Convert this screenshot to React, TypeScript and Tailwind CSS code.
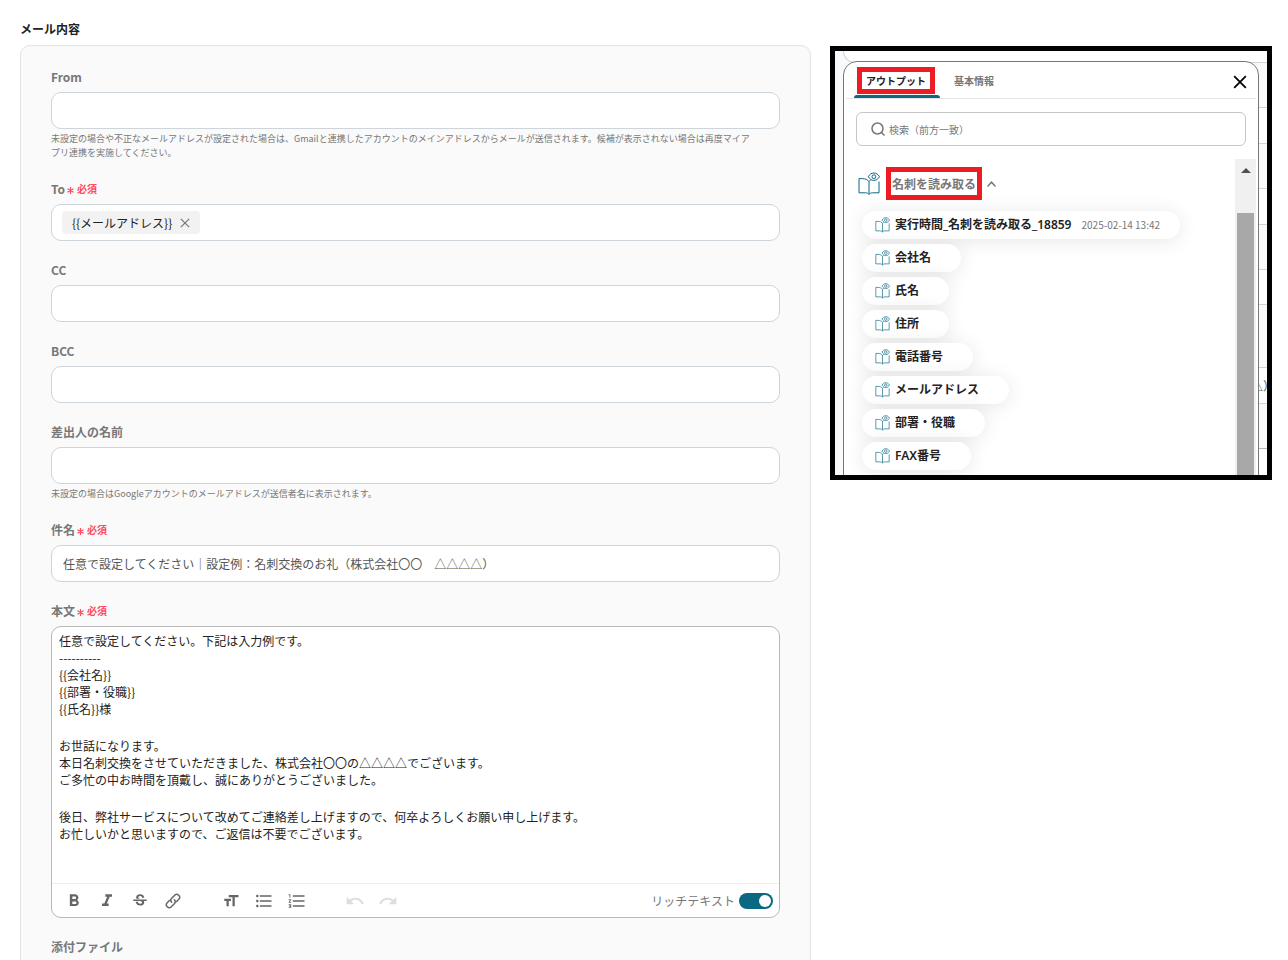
import { useState } from "react"
import type { ReactNode } from "react"
import {
  MdFormatBold,
  MdFormatItalic,
  MdFormatListBulleted,
  MdFormatListNumbered,
  MdFormatSize,
  MdRedo,
  MdStrikethroughS,
  MdUndo,
} from "react-icons/md"

const outputs = [
  { name: "実行時間_名刺を読み取る_18859", value: "2025-02-14 13:42" },
  { name: "会社名" },
  { name: "氏名" },
  { name: "住所" },
  { name: "電話番号" },
  { name: "メールアドレス" },
  { name: "部署・役職" },
  { name: "FAX番号" },
]

/* ---------------- ICONS ---------------- */
function BookIcon({ className }: { className: string }) {
  return (
    <svg viewBox="0 0 22 24" fill="none" stroke="currentColor" strokeLinejoin="round" className={className}>
      <path d="M11 9.5C9.5 7.5 7 6.6 4.5 6.6H1v14.2h6.5c1.6 0 2.6.5 3.5 1.6.9-1.1 1.9-1.6 3.5-1.6H21V9.5" />
      <path d="M11 9.5v12.9M11 9.5c.4-.6.9-1.1 1.5-1.5" />
      <path d="M10.3 4.7C11.7 2.3 13.5 1 15.9 1s4.2 1.3 5.6 3.7c-1.4 2.4-3.2 3.7-5.6 3.7s-4.2-1.3-5.6-3.7z" />
      <circle cx="15.9" cy="4.7" r="1.9" />
    </svg>
  )
}

function ChainIcon() {
  return (
    <svg viewBox="0 0 16 16" fill="none" stroke="currentColor" strokeWidth="1.5" strokeLinecap="round" className="size-4">
      <path d="M6.7 9.3a2.9 2.9 0 0 1 0-4.1l3-3a2.9 2.9 0 0 1 4.1 4.1l-2.2 2.2" />
      <path d="M9.3 6.7a2.9 2.9 0 0 1 0 4.1l-3 3a2.9 2.9 0 0 1-4.1-4.1l2.2-2.2" />
    </svg>
  )
}

function CrossIcon({ className }: { className: string }) {
  return (
    <svg viewBox="0 0 12 12" fill="none" stroke="currentColor" strokeWidth="1.5" className={className}>
      <path d="M1 1l10 10M11 1L1 11" />
    </svg>
  )
}

/* ---------------- FORM PARTS ---------------- */
function Label({ id, text, required }: { id: string; text: string; required?: boolean }) {
  return (
    <label htmlFor={id} className="mb-[6px] flex items-center gap-[2px] text-xs leading-[18px] font-semibold text-[#777]">
      {text}
      {required && (
        <span className="flex items-center gap-[3px] text-[10px] font-bold text-[#ff4b5c]">
          <svg viewBox="0 0 8 8" stroke="currentColor" strokeWidth="1.4" className="mt-[2px] size-[7px]">
            <path d="M4 0v8M0.5 2l7 4M7.5 2l-7 4" />
          </svg>
          必須
        </span>
      )}
    </label>
  )
}

type FieldProps = { id: string; label: string; required?: boolean; value?: string; hint?: string }

function Field({ id, label, required, value, hint }: FieldProps) {
  return (
    <div>
      <Label id={id} text={label} required={required} />
      <input
        id={id}
        type="text"
        defaultValue={value}
        className="block h-[37px] w-full rounded-[10px] border border-[#cdd4da] bg-white px-[11px] text-xs text-[#555]"
      />
      {hint && <p className="mt-[3px] pr-7 text-[9px] leading-[14px] text-[#777]">{hint}</p>}
    </div>
  )
}

function ToolButton({ label, disabled, children }: { label: string; disabled?: boolean; children: ReactNode }) {
  return (
    <button
      type="button"
      aria-label={label}
      disabled={disabled}
      className="flex h-8 w-[33px] items-center justify-center text-[#666] disabled:text-[#ddd]"
    >
      {children}
    </button>
  )
}

/* ---------------- MAIL FORM ---------------- */
function MailForm() {
  const [rich, setRich] = useState(true)

  return (
    <form className="min-w-0 flex-1 pt-5">
      <h1 className="mb-[7px] text-xs leading-[18px] font-bold text-[#222]">メール内容</h1>

      <div className="flex flex-col gap-5 rounded-[10px] border border-[#e2e2e2] bg-[#fafafa] px-[30px] pt-[22px] pb-20">
        <Field
          id="from"
          label="From"
          hint="未設定の場合や不正なメールアドレスが設定された場合は、Gmailと連携したアカウントのメインアドレスからメールが送信されます。候補が表示されない場合は再度マイアプリ連携を実施してください。"
        />

        <div>
          <Label id="to" text="To" required />
          <div className="flex h-[37px] items-center rounded-[10px] border border-[#cdd4da] bg-white px-[10px]">
            <span className="flex h-[23px] items-center gap-2 rounded bg-[#f2f2f2] px-[10px] text-xs text-[#222]">
              {"{{メールアドレス}}"}
              <button type="button" aria-label="削除" className="text-[#777]">
                <CrossIcon className="size-[10px]" />
              </button>
            </span>
            <input id="to" type="text" className="min-w-0 flex-1" />
          </div>
        </div>

        <Field id="cc" label="CC" />
        <Field id="bcc" label="BCC" />
        <Field
          id="sender"
          label="差出人の名前"
          hint="未設定の場合はGoogleアカウントのメールアドレスが送信者名に表示されます。"
        />
        <Field
          id="subject"
          label="件名"
          required
          value="任意で設定してください｜設定例：名刺交換のお礼（株式会社〇〇　△△△△）"
        />

        {/* ===== rich text editor ===== */}
        <div>
          <Label id="body" text="本文" required />
          <div className="rounded-[10px] border border-[#b8b8b8] bg-white">
            <div
              id="body"
              role="textbox"
              aria-multiline="true"
              contentEditable
              suppressContentEditableWarning
              className="min-h-64 space-y-5 px-[7px] pt-[5px] text-xs leading-[17px] text-[#222]"
            >
              <p>
                任意で設定してください。下記は入力例です。
                <br />
                ----------
                <br />
                {"{{会社名}}"}
                <br />
                {"{{部署・役職}}"}
                <br />
                {"{{氏名}}様"}
              </p>
              <p>
                お世話になります。
                <br />
                本日名刺交換をさせていただきました、株式会社〇〇の△△△△でございます。
                <br />
                ご多忙の中お時間を頂戴し、誠にありがとうございました。
              </p>
              <p>
                後日、弊社サービスについて改めてご連絡差し上げますので、何卒よろしくお願い申し上げます。
                <br />
                お忙しいかと思いますので、ご返信は不要でございます。
              </p>
            </div>

            <div className="flex h-[34px] items-center border-t border-[#eee] pr-[6px] pl-[5px]">
              <ToolButton label="太字"><MdFormatBold size={20} /></ToolButton>
              <ToolButton label="斜体"><MdFormatItalic size={20} /></ToolButton>
              <ToolButton label="取り消し線"><MdStrikethroughS size={18} /></ToolButton>
              <ToolButton label="リンク"><ChainIcon /></ToolButton>
              <div className="ml-[25px] flex">
                <ToolButton label="文字サイズ"><MdFormatSize size={18} /></ToolButton>
                <ToolButton label="箇条書き"><MdFormatListBulleted size={20} /></ToolButton>
                <ToolButton label="番号付きリスト"><MdFormatListNumbered size={20} /></ToolButton>
              </div>
              <div className="ml-[25px] flex">
                <ToolButton label="元に戻す" disabled><MdUndo size={20} /></ToolButton>
                <ToolButton label="やり直す" disabled><MdRedo size={20} /></ToolButton>
              </div>

              <label className="ml-auto flex items-center gap-1 text-xs text-[#777]">
                リッチテキスト
                <input
                  type="checkbox"
                  checked={rich}
                  onChange={() => setRich(!rich)}
                  className="peer sr-only"
                />
                <span className="flex h-4 w-[34px] items-center rounded-full bg-[#aaa] p-[2px] peer-checked:justify-end peer-checked:bg-[#0b6882]">
                  <span className="size-3 rounded-full bg-white" />
                </span>
              </label>
            </div>
          </div>
        </div>

        <Label id="attachment" text="添付ファイル" />
      </div>
    </form>
  )
}

/* ---------------- OUTPUT DIALOG ---------------- */
function OutputDialog() {
  return (
    <section className="absolute inset-x-2 top-[10px] -bottom-8 flex flex-col rounded-[14px] border border-[#777] bg-white">
      <div className="mx-[2px] flex h-[37px] shrink-0 border-b border-[#e4e4e4] pr-[9px] pl-2">
        <button type="button" className="flex w-[86px] flex-col justify-end text-[10px] font-bold text-[#222]">
          <span className="mb-px ml-[3px] flex h-[27px] w-[78px] items-center justify-center border-5 border-[#ed1c24]">
            アウトプット
          </span>
          <span className="h-[3px] w-full rounded-t-sm bg-[#0b6882]" />
        </button>
        <button type="button" className="ml-[14px] text-[10px] font-semibold text-[#777]">
          基本情報
        </button>
        <button type="button" aria-label="閉じる" className="ml-auto pt-1 text-black">
          <CrossIcon className="size-[14px]" />
        </button>
      </div>

      <label className="mx-3 mt-[13px] flex h-[34px] shrink-0 items-center gap-1 rounded-md border border-[#c6c6c6] pl-[14px]">
        <svg viewBox="0 0 14 14" fill="none" stroke="#777" strokeWidth="1.5" className="size-[14px]">
          <circle cx="6.5" cy="6.5" r="5.5" />
          <path d="M10.3 10.3L13.5 13.5" />
        </svg>
        <input
          type="text"
          aria-label="検索"
          placeholder="検索（前方一致）"
          className="min-w-0 flex-1 text-[10px] placeholder:text-[#777]"
        />
      </label>

      <div className="mt-[13px] mr-[2px] flex min-h-0 flex-1">
        <div className="min-w-0 flex-1 overflow-hidden pl-[14px]">
          <div className="flex h-[49px] items-center text-[#777]">
            <BookIcon className="h-6 w-[22px] text-[#0b6882]" />
            <button type="button" className="flex items-center gap-[5px] pl-[6px]">
              <span className="flex h-[33px] w-24 items-center justify-center border-5 border-[#ed1c24] text-xs font-semibold">
                名刺を読み取る
              </span>
              <svg viewBox="0 0 9 6" fill="none" stroke="currentColor" strokeWidth="1.5" className="h-[6px] w-[9px]">
                <path d="M0.5 5.5L4.5 1.2l4 4.3" />
              </svg>
            </button>
          </div>

          <ul className="flex flex-col items-start gap-[5px] pt-[3px] pl-1">
            {outputs.map((item) => (
              <li key={item.name}>
                <button
                  type="button"
                  className="flex h-7 items-center rounded-full bg-white pr-5 pl-[13px] text-xs font-semibold text-[#222] shadow-[0_2px_20px_rgba(0,0,0,0.1)]"
                >
                  <BookIcon className="mr-[5px] h-4 w-[15px] text-[#0b6882]" />
                  <span className="font-['Noto_Sans','Noto_Sans_CJK_JP',sans-serif]">{item.name}</span>
                  <span className="ml-[10px] text-[10px] font-normal text-[#777]">{item.value}</span>
                </button>
              </li>
            ))}
          </ul>
        </div>

        {/* scroll bar */}
        <div className="flex w-[21px] flex-col items-center bg-[#f0f0f0] pt-[9px]">
          <span className="border-x-5 border-b-5 border-x-transparent border-b-[#505050]" />
          <span className="mt-10 w-[17px] flex-1 bg-[#a8a8a8]" />
        </div>
      </div>
    </section>
  )
}

/* rows of the form that show past the edges of the dialog */
function FormBehind() {
  return (
    <div aria-hidden="true" className="bg-[#f9fafb]">
      <div className="ml-2 h-3 rounded-bl-xl border-b border-l border-[#cdd4da] bg-white" />
      <div className="h-11" />
      <div className="ml-2 h-[37px] border-y border-[#cdd4da] bg-white" />
      <div className="h-11" />
      <div className="ml-2 h-[37px] border-y border-[#cdd4da] bg-white" />
      <div className="h-11" />
      <div className="ml-2 h-9 border-y border-[#cdd4da] bg-white" />
      <div className="h-[62px]" />
      <div className="ml-2 flex h-[37px] items-center justify-end border-y border-[#cdd4da] bg-white text-xs text-[#555]">
        <span className="-mr-[8px]">△）</span>
      </div>
      <div className="h-11" />
      <div className="ml-2 h-7 border-t border-[#b8b8b8] bg-white" />
    </div>
  )
}

export default function App() {
  return (
    <div
      lang="ja"
      className="flex h-screen items-start gap-[19px] overflow-hidden bg-white pr-4 pl-5 font-['Noto_Sans_CJK_JP',sans-serif]"
    >
      <MailForm />
      <aside className="relative mt-[46px] h-[434px] w-[442px] shrink-0 overflow-hidden border-5 border-black">
        <FormBehind />
        <OutputDialog />
      </aside>
    </div>
  )
}
